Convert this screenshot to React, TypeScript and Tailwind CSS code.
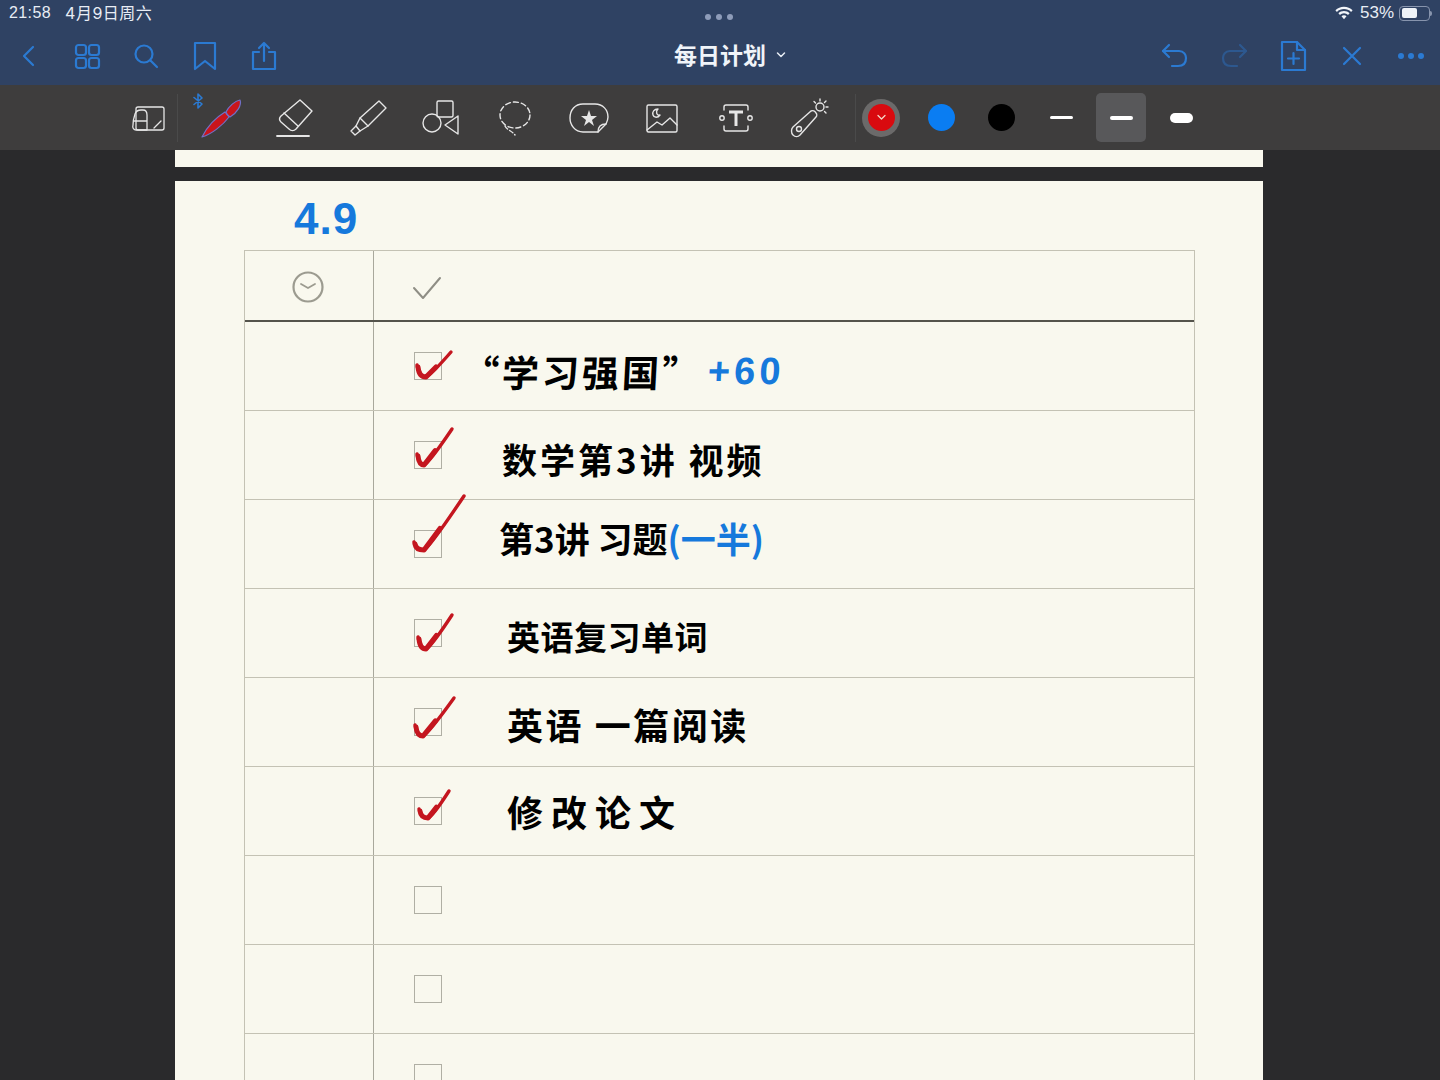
import React from 'react';

const HAND = "font-['Noto_Sans_CJK_SC',sans-serif] font-bold text-black whitespace-nowrap";
const BLUE_INK = 'text-[#1679dc]';

type Pt = [number, number];

const NavIcon = ({ children, dim }: { children: React.ReactNode; dim?: boolean }) => (
  <div className={`w-[59px] flex justify-center ${dim ? 'opacity-40' : ''}`}>
    <svg width="32" height="32" viewBox="0 0 32 32" fill="none" stroke="#2b7ad2" strokeWidth="2.2" strokeLinecap="round" strokeLinejoin="round">
      {children}
    </svg>
  </div>
);

const ToolIcon = ({ children, className }: { children: React.ReactNode; className?: string }) => (
  <div className={`w-[73.6px] flex justify-center shrink-0 ${className ?? ''}`}>
    <svg width="44" height="44" viewBox="0 0 44 44" fill="none" stroke="#e6e6e6" strokeWidth="1.4" strokeLinecap="round" strokeLinejoin="round">
      {children}
    </svg>
  </div>
);

const Slot = ({ children, className }: { children?: React.ReactNode; className?: string }) => (
  <div className={`w-[50px] h-[49px] flex items-center justify-center shrink-0 ${className ?? ''}`}>{children}</div>
);

// brush tick: thin full stroke, heavier through the bottom of the tick
const RedCheck = ({ s, b, e }: { s: Pt; b: Pt; e: Pt }) => {
  const midX = b[0] + (e[0] - b[0]) * 0.4;
  const midY = b[1] + (e[1] - b[1]) * 0.4;
  return (
    <svg className="absolute left-0 top-0 overflow-visible" width="28" height="28" viewBox="0 0 28 28" fill="none">
      <path
        d={`M${s[0]} ${s[1]} Q${s[0] + 2} ${b[1]} ${b[0]} ${b[1]} Q${b[0] + 5} ${b[1] - 2} ${e[0]} ${e[1]}`}
        stroke="#c4161f"
        strokeWidth="3.4"
        strokeLinecap="round"
        strokeLinejoin="round"
      />
      <path
        d={`M${s[0] + 1} ${s[1] + 2} Q${s[0] + 2} ${b[1]} ${b[0]} ${b[1]} L${midX} ${midY}`}
        stroke="#c4161f"
        strokeWidth="5"
        strokeLinecap="round"
        strokeLinejoin="round"
      />
    </svg>
  );
};

const Row = ({ check, children }: { check?: { s: Pt; b: Pt; e: Pt }; children?: React.ReactNode }) => (
  <div className="flex h-[89px] border-b border-[#c4c2b4]">
    <div className="w-[129px] shrink-0 border-r border-[#a9a89c]" />
    <div className="flex items-center pl-[40px]">
      <div className="relative w-[28px] h-[28px] shrink-0 border border-[#b0afa4]">
        {check && <RedCheck {...check} />}
      </div>
      {children}
    </div>
  </div>
);

export default function App() {
  return (
    <div className="w-[1440px] h-[1080px] overflow-hidden flex flex-col bg-[#2a2a2c] font-['Liberation_Sans',sans-serif]">
      <header className="h-[85px] shrink-0 bg-[#2f4263]">
        {/* status bar */}
        <div className="relative h-[30px] flex items-start justify-between pl-[9px] pr-[10px] pt-[4px] text-[#e8edf5] text-[16px] leading-[18px]">
          <div className="flex">
            <span className="tracking-[0.4px]">21:58</span>
            <span className="ml-[14px] font-['Inter','Noto_Sans_CJK_SC',sans-serif] text-[16px] tracking-[0.5px]">4月9日周六</span>
          </div>
          <div className="absolute left-[705px] top-[14px] flex gap-[5px]">
            <span className="w-[6px] h-[6px] rounded-full bg-[#8e9cb9]" />
            <span className="w-[6px] h-[6px] rounded-full bg-[#8e9cb9]" />
            <span className="w-[6px] h-[6px] rounded-full bg-[#8e9cb9]" />
          </div>
          <div className="flex items-center">
            <svg width="18" height="14" viewBox="0 0 18 14" fill="#f2f5fa">
              <path d="M9 0.8C5.6 0.8 2.7 2.1 0.4 4.2l1.5 1.7C3.8 4.1 6.3 3.1 9 3.1s5.2 1 7.1 2.8l1.5-1.7C15.3 2.1 12.4 0.8 9 0.8z" />
              <path d="M9 5c-2.2 0-4.2 0.9-5.6 2.3L5 9c1.1-1 2.5-1.7 4-1.7S11.9 8 13 9l1.6-1.7C13.2 5.9 11.2 5 9 5z" />
              <path d="M9 9.3c-1 0-1.9 0.4-2.5 1L9 13.2l2.5-2.9c-0.6-0.6-1.5-1-2.5-1z" />
            </svg>
            <span className="ml-[7px] text-[17px]">53%</span>
            <div className="relative ml-[5px] w-[31px] h-[15px] rounded-[4px] border border-[#8794ad] p-[1.5px]">
              <div className="w-[15px] h-full rounded-[2px] bg-[#eef3f8]" />
              <div className="absolute -right-[3px] top-[4px] w-[2px] h-[5px] rounded-r-sm bg-[#8794ad]" />
            </div>
          </div>
        </div>
        {/* nav bar */}
        <div className="relative h-[55px] flex items-center justify-between pb-[3px]">
          <div className="flex -ml-[2px]">
            <NavIcon><path d="M21 7 L12 16 L21 25" /></NavIcon>
            <NavIcon>
              <rect x="5" y="5" width="10" height="10" rx="2.5" />
              <rect x="18" y="5" width="10" height="10" rx="2.5" />
              <rect x="5" y="18" width="10" height="10" rx="2.5" />
              <rect x="18" y="18" width="10" height="10" rx="2.5" />
            </NavIcon>
            <NavIcon>
              <circle cx="14" cy="14" r="8.5" />
              <path d="M20.5 20.5 L27 27" />
            </NavIcon>
            <NavIcon><path d="M6 3 H26 V29 L16 21 L6 29 Z" /></NavIcon>
            <NavIcon>
              <path d="M11 12 H5 V29 H27 V12 H21" />
              <path d="M16 21 V3 M11 8 L16 3 L21 8" />
            </NavIcon>
          </div>
          <div className="absolute left-0 right-0 flex justify-center pb-[3px] pointer-events-none">
            <div className="flex items-center pl-[20px] font-['Noto_Sans_CJK_SC',sans-serif] font-bold text-[23px] leading-none text-[#f0f4f9]">
              每日计划
              <svg className="ml-[10px]" width="10" height="8" viewBox="0 0 10 8" fill="none" stroke="#e8edf5" strokeWidth="1.5" strokeLinecap="round" strokeLinejoin="round">
                <path d="M1.5 2 L5 5.5 L8.5 2" />
              </svg>
            </div>
          </div>
          <div className="flex items-center">
            <NavIcon>
              <path d="M10 5 L4 11 L10 17" />
              <path d="M4 11 H20 C25 11 27 15 27 18 C27 23 24 26 19 26 H13" />
            </NavIcon>
            <NavIcon dim>
              <path d="M22 5 L28 11 L22 17" />
              <path d="M28 11 H12 C7 11 5 15 5 18 C5 23 8 26 13 26 H19" />
            </NavIcon>
            <NavIcon>
              <path d="M5 2 H20 L28 10 V30 H5 Z" />
              <path d="M20 2 V10 H28" />
              <path d="M16.5 13 V24 M11 18.5 H22" />
            </NavIcon>
            <NavIcon><path d="M8 8 L24 24 M24 8 L8 24" /></NavIcon>
            <div className="w-[59px] flex items-center justify-center gap-[4px]">
              <span className="w-[6px] h-[6px] rounded-full bg-[#2b7ad2]" />
              <span className="w-[6px] h-[6px] rounded-full bg-[#2b7ad2]" />
              <span className="w-[6px] h-[6px] rounded-full bg-[#2b7ad2]" />
            </div>
          </div>
        </div>
      </header>

      {/* tool bar */}
      <div className="h-[65px] shrink-0 bg-[#3e3d3d] flex items-center">
        <div className="w-[177px] shrink-0 flex justify-end pr-[11px] h-full items-center">
          <svg width="36" height="30" viewBox="0 0 36 30" fill="none" stroke="#e6e6e6" strokeWidth="1.3" strokeLinecap="round" strokeLinejoin="round">
            <rect x="6" y="4" width="28" height="23" rx="2" />
            <path d="M3 22 C3 18 4 14 5 11 C6 8 8 7 11 7 H13 C16 7 17 9 17 12 V27 H6 C4 27 2 25 3 22 Z M4 18 H17 M24 25 L31 18" />
          </svg>
        </div>
        <div className="w-px h-[48px] shrink-0 bg-[#4a4a4a]" />
        <div className="flex items-center shrink-0 ml-[6px] pt-[2px]">
          <div className="relative w-[73.6px] flex justify-center shrink-0">
            <svg className="absolute left-[8px] -top-[4px]" width="12" height="16" viewBox="0 0 12 16" fill="none" stroke="#2b7ad2" strokeWidth="1.6" strokeLinecap="round" strokeLinejoin="round">
              <path d="M2 4.5 L10 11 L6 15 V1 L10 5 L2 11.5" />
            </svg>
            <svg width="44" height="44" viewBox="0 0 44 44" fill="none">
              <path d="M3 40 C8 30 16 21 26 15 L30 20 C24 28 13 37 3 40 Z" fill="#c9151c" stroke="#6f71c8" strokeWidth="1.2" strokeLinejoin="round" />
              <path d="M27 15 C30 9 36 4 41 3 C43 8 38 16 31 20 C29 19 27.5 17 27 15 Z" fill="#c9151c" stroke="#6f71c8" strokeWidth="1.2" strokeLinejoin="round" />
            </svg>
          </div>
          <ToolIcon>
            <path d="M28 3 L40 14 L24 32 C22 34 19 34 17 32 L9 25 C7 23 7 21 9 19 Z" />
            <path d="M12 16 L26 29" />
            <path d="M5 39 H37" strokeWidth="1.8" />
          </ToolIcon>
          <ToolIcon>
            <path d="M33 4 L40 11 L22 29 L14 21 Z" />
            <path d="M14 21 L10 29 L14 34 L22 29" />
            <path d="M10 29 L5 34 L9 38 L14 34" />
          </ToolIcon>
          <ToolIcon>
            <rect x="17" y="4" width="16" height="16" rx="1.5" />
            <circle cx="12" cy="26" r="9" />
            <path d="M38 19 V37 L25 28 Z" />
          </ToolIcon>
          <ToolIcon>
            <ellipse cx="22" cy="18" rx="15" ry="13" strokeDasharray="5 3" />
            <path d="M12 29 C14 33 19 34 22 38" strokeDasharray="4 2.5" />
          </ToolIcon>
          <ToolIcon>
            <path d="M16 7 H28 C36 7 41 13 41 20 C41 23 40 25 39 27 L31 35 H16 C8 35 3 28 3 21 C3 13 8 7 16 7 Z" />
            <path d="M31 35 C31 30 33 27 39 27" />
            <path d="M22 13 L24 19 L30 19 L25 23 L27 29 L22 25 L17 29 L19 23 L14 19 L20 19 Z" fill="#e6e6e6" stroke="none" />
          </ToolIcon>
          <ToolIcon>
            <rect x="7" y="8" width="30" height="27" rx="1.5" />
            <path d="M7 33 L17 25 L22 28 L30 21 L37 28" />
            <path d="M18 12 C14 12 12 15 13 18 C14 21 18 21 20 18 C17 19 15 15 18 12 Z" />
          </ToolIcon>
          <ToolIcon>
            <path d="M10 13 V10 C10 9 10.5 8 12 8 H32 C33.5 8 34 9 34 10 V13 M10 29 V32 C10 33.5 11 34 12 34 H32 C33 34 34 33.5 34 32 V29" />
            <circle cx="8" cy="21" r="2.2" />
            <circle cx="36" cy="21" r="2.2" />
            <path d="M15 15 H29 M22 15 V29" strokeWidth="3" strokeLinecap="butt" />
          </ToolIcon>
          <ToolIcon>
            <path d="M5 30 L23 14 C25 13 27 14 28 16 C29 17 29 19 28 20 L12 38 C10 40 7 40 5 38 C3 36 3 32 5 30 Z" />
            <circle cx="11" cy="32" r="2.5" />
            <circle cx="32" cy="10" r="4" />
            <path d="M32 2 V4 M40 10 H38 M26 4.5 L27.5 6 M38 4 L36.5 5.5 M38 16 L36.5 14.5" />
          </ToolIcon>
        </div>
        <div className="w-px h-[48px] shrink-0 ml-[9px] bg-[#4a4a4a]" />
        <div className="flex items-center gap-[10px] shrink-0">
          <Slot>
            <div className="w-[38px] h-[38px] rounded-full bg-[#6b6a6a] flex items-center justify-center">
              <div className="w-[27px] h-[27px] rounded-full bg-[#d90a0f] flex items-center justify-center">
                <svg width="9" height="7" viewBox="0 0 9 7" fill="none" stroke="#f4d7c8" strokeWidth="1.3" strokeLinecap="round" strokeLinejoin="round">
                  <path d="M1 1.5 L4.5 5 L8 1.5" />
                </svg>
              </div>
            </div>
          </Slot>
          <Slot><div className="w-[27px] h-[27px] rounded-full bg-[#0a7df2]" /></Slot>
          <Slot><div className="w-[27px] h-[27px] rounded-full bg-black" /></Slot>
          <Slot><div className="w-[23px] h-[2.5px] rounded-full bg-white" /></Slot>
          <Slot className="rounded-[5px] bg-[#58585a]"><div className="w-[23px] h-[4px] rounded-full bg-white" /></Slot>
          <Slot><div className="w-[23px] h-[10px] rounded-full bg-white" /></Slot>
        </div>
      </div>

      {/* pages */}
      <main className="flex-1 min-h-0 pl-[175px]">
        <div className="w-[1088px] h-[17px] bg-[#f9f8ee]" />
        <div className="w-[1088px] mt-[14px] h-[1000px] bg-[#f9f8ee] pl-[69px]">
          <div className={`h-[69px] pl-[50px] pt-[14px] text-[44px] leading-[48px] font-['Liberation_Sans',sans-serif] font-bold tracking-[1px] ${BLUE_INK}`}>4.9</div>
          <div className="w-[951px] border-x border-t border-[#c4c2b4]">
            <div className="flex h-[71px] border-b-2 border-[#55544c]">
              <div className="w-[129px] shrink-0 border-r border-[#a9a89c] flex items-center justify-center pt-[3px] pr-[2px]">
                <svg width="34" height="34" viewBox="0 0 34 34" fill="none" stroke="#9c9b90" strokeWidth="2.2" strokeLinecap="round" strokeLinejoin="round">
                  <circle cx="17" cy="17" r="14.5" />
                  <path d="M10 14 L17 18 L24 14" strokeWidth="1.8" />
                </svg>
              </div>
              <div className="flex items-center pl-[38px] pt-[5px]">
                <svg width="30" height="24" viewBox="0 0 30 24" fill="none" stroke="#8f8e85" strokeWidth="2" strokeLinecap="round" strokeLinejoin="round">
                  <path d="M2 12 L11 22 L28 2" />
                </svg>
              </div>
            </div>
            <Row check={{ s: [2, 12], b: [11, 24], e: [36, -1] }}>
              <div className={`${HAND} ml-[20px] mt-[10px] flex items-center text-[37px] leading-[44px] tracking-[3px] -skew-x-3`}>
                “学习强国”
                <span className={`ml-[6px] ${BLUE_INK} font-['Liberation_Sans',sans-serif] text-[38px] tracking-[4px]`}>+60</span>
              </div>
            </Row>
            <Row check={{ s: [2, 12], b: [9, 23], e: [37, -13] }}>
              <div className={`${HAND} ml-[60px] mt-[8px] text-[35px] leading-[44px] tracking-[3px]`}>数学第3讲 视频</div>
            </Row>
            <Row check={{ s: [-1, 11], b: [9, 19], e: [49, -35] }}>
              <div className={`${HAND} ml-[57px] -mt-[12px] flex items-center text-[35px] leading-[44px]`}>
                第3讲 习题
                <span className={BLUE_INK}>(一半)</span>
              </div>
            </Row>
            <Row check={{ s: [3, 17], b: [11, 29], e: [37, -5] }}>
              <div className={`${HAND} ml-[65px] mt-[6px] text-[33px] leading-[44px] tracking-[0.5px]`}>英语复习单词</div>
            </Row>
            <Row check={{ s: [0, 16], b: [8, 27], e: [39, -11] }}>
              <div className={`${HAND} ml-[65px] mt-[4px] text-[36px] leading-[44px] tracking-[2.5px]`}>英语 一篇阅读</div>
            </Row>
            <Row check={{ s: [4, 11], b: [13, 20], e: [34, -7] }}>
              <div className={`${HAND} ml-[65px] text-[36px] leading-[44px] tracking-[8px]`}>修改论文</div>
            </Row>
            <Row />
            <Row />
            <Row />
          </div>
        </div>
      </main>
    </div>
  );
}
